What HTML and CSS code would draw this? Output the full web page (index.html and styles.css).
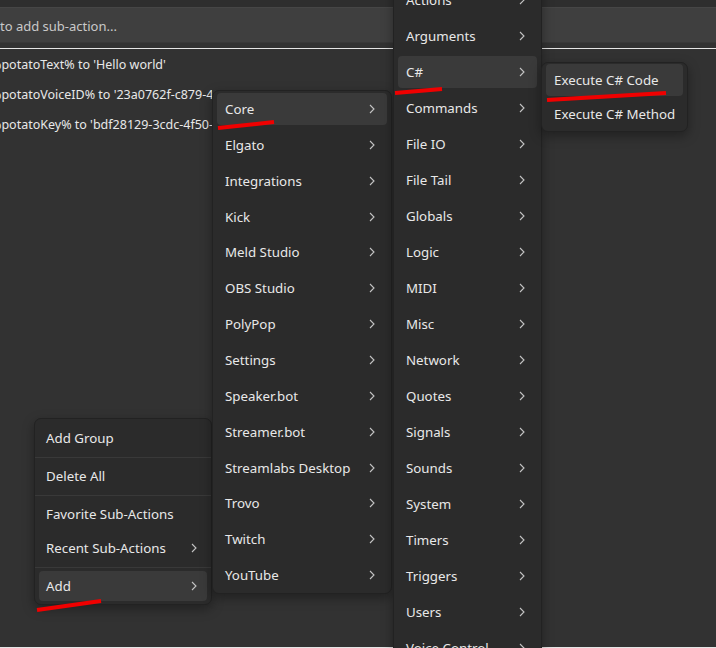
FILE: index.html
```
<!DOCTYPE html>
<html lang="en">
<head>
    <meta charset="UTF-8">
    <meta name="viewport" content="width=device-width, initial-scale=1.0">
    <title>Sub-Actions</title>
    <link rel="stylesheet" href="styles.css">
</head>
<body>
    <div class="page">
        <div class="topbar"></div>
        <div class="search">to add sub-action...</div>
        <div class="rule"></div>
        <div class="rows">
            <div class="row">%potatoText% to 'Hello world'</div>
            <div class="row">%potatoVoiceID% to '23a0762f-c879-4a2b-9d11-6b8e0f3c2a71'</div>
            <div class="row">%potatoKey% to 'bdf28129-3cdc-4f50-8b7e-1a2c3d4e5f60'</div>
        </div>
        <div class="rule"></div>
    </div>

    <!-- context menu -->
    <div class="menu menu-context">
        <div class="item">Add Group</div>
        <div class="sep"></div>
        <div class="item">Delete All</div>
        <div class="sep"></div>
        <div class="item">Favorite Sub-Actions</div>
        <div class="item sub">Recent Sub-Actions</div>
        <div class="sep"></div>
        <div class="item sub active">Add</div>
    </div>

    <!-- Add > -->
    <div class="menu menu-add">
        <div class="item sub active">Core</div>
        <div class="item sub">Elgato</div>
        <div class="item sub">Integrations</div>
        <div class="item sub">Kick</div>
        <div class="item sub">Meld Studio</div>
        <div class="item sub">OBS Studio</div>
        <div class="item sub">PolyPop</div>
        <div class="item sub">Settings</div>
        <div class="item sub">Speaker.bot</div>
        <div class="item sub">Streamer.bot</div>
        <div class="item sub">Streamlabs Desktop</div>
        <div class="item sub">Trovo</div>
        <div class="item sub">Twitch</div>
        <div class="item sub">YouTube</div>
    </div>

    <!-- Core > -->
    <div class="menu menu-core">
        <div class="item sub">Actions</div>
        <div class="item sub">Arguments</div>
        <div class="item sub active">C#</div>
        <div class="item sub">Commands</div>
        <div class="item sub">File IO</div>
        <div class="item sub">File Tail</div>
        <div class="item sub">Globals</div>
        <div class="item sub">Logic</div>
        <div class="item sub">MIDI</div>
        <div class="item sub">Misc</div>
        <div class="item sub">Network</div>
        <div class="item sub">Quotes</div>
        <div class="item sub">Signals</div>
        <div class="item sub">Sounds</div>
        <div class="item sub">System</div>
        <div class="item sub">Timers</div>
        <div class="item sub">Triggers</div>
        <div class="item sub">Users</div>
        <div class="item sub">Voice Control</div>
    </div>

    <!-- C# > -->
    <div class="menu menu-csharp">
        <div class="item active">Execute C# Code</div>
        <div class="item">Execute C# Method</div>
    </div>

    <svg class="marks" width="716" height="648" viewBox="0 0 716 648">
        <line x1="37" y1="610" x2="101" y2="601" />
        <line x1="218" y1="128" x2="274" y2="122" />
        <line x1="395" y1="93" x2="442" y2="89" />
        <line x1="547" y1="100" x2="666" y2="93" />
    </svg>

    <script>
        // chevrons for items that open a submenu
        document.querySelectorAll(".item.sub").forEach(item => {
            item.insertAdjacentHTML("beforeend",
                '<svg class="chev" width="6" height="10" viewBox="0 0 6 10"><polyline points="1,1 5,5 1,9" /></svg>');
        });
    </script>
</body>
</html>
```

FILE: styles.css
```
body {
    margin: 0;
    overflow: hidden;
    background-color: #323232;
    font-family: "Noto Sans", "Open Sans", sans-serif;
    font-size: 13.3px;
    color: #e8e8e8;
}
.page {
    height: 648px;
    display: flex;
    flex-direction: column;
}
.topbar {
    height: 7px;
    background-color: #2e2e2e;
}
.search {
    height: 34px;
    line-height: 36px;
    background-color: #3f3f3f;
    border-top: 1px solid #464646;
    border-bottom: 1px solid #383838;
    color: #c9c9c9;
    font-size: 13px;
    margin-bottom: 5px;
    white-space: nowrap;
}
.rule {
    height: 1px;
    background-color: #e4e4e4;
}
.rows {
    flex: 1;
    width: 212px;
    overflow: hidden;
    padding-top: 1px;
    font-size: 12.5px;
}
.row {
    height: 30px;
    line-height: 30px;
    margin-left: -9px;
    white-space: nowrap;
}
.menu {
    position: absolute;
    box-sizing: border-box;
    background-color: #2b2b2b;
    border: 1px solid #222;
    border-radius: 7px;
    box-shadow: 0 4px 12px rgba(0,0,0,0.35);
    padding: 0 4px;
    display: flex;
    flex-direction: column;
}
.item {
    height: 32px;
    margin: 2px 0;
    padding: 0 12px 0 8px;
    border-radius: 4px;
    display: flex;
    align-items: center;
    justify-content: space-between;
    white-space: nowrap;
}
.item.active {
    background-color: #3a3a3a;
}
.chev {
    fill: none;
    stroke: #c4c4c4;
    stroke-width: 1.1;
}
.sep {
    height: 1px;
    margin: 2px -4px 1px;
    background-color: #393939;
}
.menu-context {
    left: 34px;
    top: 418px;
    width: 178px;
    padding-top: 2px;
    padding-bottom: 1px;
}
.menu-context .item {
    height: 30px;
    padding-left: 7px;
    padding-right: 10px;
}
.menu-add {
    left: 212px;
    top: 90px;
    width: 180px;
    height: 504px;
    z-index: 2;
}
.menu-core {
    left: 393px;
    top: -19px;
    width: 149px;
    height: 700px;
    z-index: 3;
}
.menu-csharp {
    left: 541px;
    top: 62px;
    width: 147px;
    padding-top: 1px;
    padding-bottom: 1px;
    gap: 2px;
    z-index: 4;
}
.menu-csharp .item {
    margin: 0;
}
.marks {
    position: absolute;
    left: 0;
    top: 0;
    z-index: 10;
}
.marks line {
    stroke: #f00000;
    stroke-width: 4;
}
```
